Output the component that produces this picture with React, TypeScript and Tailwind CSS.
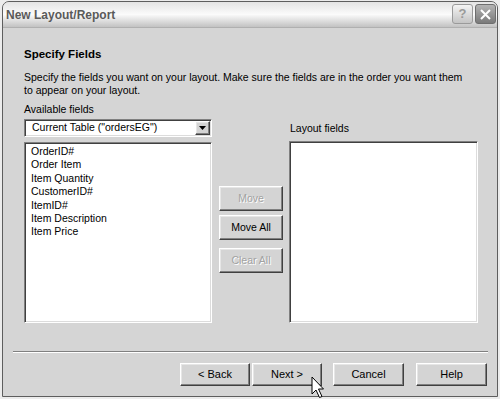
const fields = [
  "OrderID#",
  "Order Item",
  "Item Quantity",
  "CustomerID#",
  "ItemID#",
  "Item Description",
  "Item Price",
];

const raised =
  "border border-t-white border-l-white border-r-[#404040] border-b-[#404040] shadow-[inset_-1px_-1px_0_#808080,inset_1px_1px_0_#e6e6e6] bg-[#d4d4d4]";
const sunken =
  "border border-t-[#808080] border-l-[#808080] border-r-white border-b-white shadow-[inset_1px_1px_0_#404040,inset_-1px_-1px_0_#dcdcdc] bg-white";

function Btn({
  label,
  disabled,
  className,
}: {
  label: string;
  disabled?: boolean;
  className: string;
}) {
  return (
    <div
      className={`${raised} ${className} flex items-center justify-center ${
        disabled
          ? "text-[#a2a2a2] [text-shadow:1px_1px_0_#ffffff]"
          : "text-black"
      }`}
    >
      {label}
    </div>
  );
}

function Cursor() {
  return (
    <svg
      className="absolute left-[311px] top-[376px]"
      width="14"
      height="23"
      viewBox="0 0 14 23"
    >
      <path
        d="M1 1 L1 18 L5 14 L8.5 21.5 L11 20.5 L7.5 13 L12.5 13 Z"
        fill="white"
        stroke="black"
        strokeWidth="1"
        strokeLinejoin="miter"
      />
    </svg>
  );
}

export default function App() {
  return (
    <div className="relative w-[500px] h-[399px] bg-[#ececec] pl-[2px] pt-[1px] overflow-hidden font-['Liberation_Sans',Arial,sans-serif] text-[10.5px] text-black">
      <div className="w-[496px] h-[396px] border border-[#5e5e5e] rounded-t-[7px] flex flex-col overflow-hidden bg-[#d5d5d5]">
        {/* title bar */}
        <div className="h-[26px] flex items-center justify-between bg-gradient-to-b from-[#e4e4e4] via-[#fbfbfb] to-[#c2c2c2] border-b border-[#b0b0b0]">
          <div className="pl-[3px] text-[12px] font-bold text-[#5a5a5a] pt-[1px]">
            New Layout/Report
          </div>
          <div className="flex gap-[2px] pr-[1px] pb-[1px]">
            <div className="w-[21px] h-[20px] rounded-[3px] border border-[#9a9a9a] bg-gradient-to-b from-[#f4f4f4] to-[#c4c4c4] flex items-center justify-center text-[13px] font-bold text-[#9a9a9a]">
              ?
            </div>
            <div className="w-[21px] h-[20px] rounded-[3px] border border-[#6e6e6e] bg-gradient-to-b from-[#b4b4b4] to-[#7a7a7a] flex items-center justify-center">
              <svg width="13" height="13" viewBox="0 0 13 13">
                <path
                  d="M2 2 L11 11 M11 2 L2 11"
                  stroke="white"
                  strokeWidth="2"
                />
              </svg>
            </div>
          </div>
        </div>

        {/* body */}
        <div className="flex-1 flex flex-col pt-[19px]">
          <div className="pl-[21px]">
            <div className="h-[15px] leading-[15px] text-[11.5px] font-bold">
              Specify Fields
            </div>
            <div className="mt-[9px] leading-[13px]">
              Specify the fields you want on your layout. Make sure the fields
              are in the order you want them
              <br />
              to appear on your layout.
            </div>

            <div className="mt-[5px] flex">
              {/* left column */}
              <div className="w-[188px] flex flex-col">
                <div className="h-[14px] leading-[14px]">Available fields</div>
                <div
                  className={`${sunken} mt-[3px] h-[18px] flex items-center justify-between pl-[7px] pr-[1px]`}
                >
                  <span>Current Table ("ordersEG")</span>
                  <div
                    className={`${raised} w-[15px] h-[14px] flex items-center justify-center`}
                  >
                    <svg width="7" height="4" viewBox="0 0 7 4">
                      <path d="M0 0 L7 0 L3.5 4 Z" fill="black" />
                    </svg>
                  </div>
                </div>
                <div
                  className={`${sunken} mt-[5px] h-[181px] pl-[6px] pt-[2px]`}
                >
                  {fields.map((f) => (
                    <div key={f} className="h-[13.4px] leading-[13.4px]">
                      {f}
                    </div>
                  ))}
                </div>
              </div>

              {/* middle buttons */}
              <div className="ml-[7px] w-[64px] flex flex-col pt-[84px]">
                <Btn label="Move" disabled className="h-[25px]" />
                <Btn label="Move All" className="h-[25px] mt-[4px]" />
                <Btn label="Clear All" disabled className="h-[25px] mt-[8px]" />
              </div>

              {/* right column */}
              <div className="ml-[6px] w-[189px] flex flex-col pt-[20px]">
                <div className="h-[13px] leading-[13px] pl-[1px]">
                  Layout fields
                </div>
                <div className={`${sunken} mt-[6px] h-[182px]`} />
              </div>
            </div>
          </div>

          {/* separator */}
          <div className="ml-[10px] w-[475px] mt-[28px] h-[2px] border-t border-[#808080] border-b border-b-white" />

          {/* bottom buttons */}
          <div className="mt-[10px] flex pl-[177px] text-[11px]">
            <Btn label="< Back" className="w-[70px] h-[23px]" />
            <Btn label="Next >" className="w-[70px] h-[23px] ml-[2px]" />
            <Btn label="Cancel" className="w-[71px] h-[23px] ml-[11px]" />
            <Btn label="Help" className="w-[71px] h-[23px] ml-[12px]" />
          </div>
        </div>
      </div>
      <Cursor />
    </div>
  );
}
